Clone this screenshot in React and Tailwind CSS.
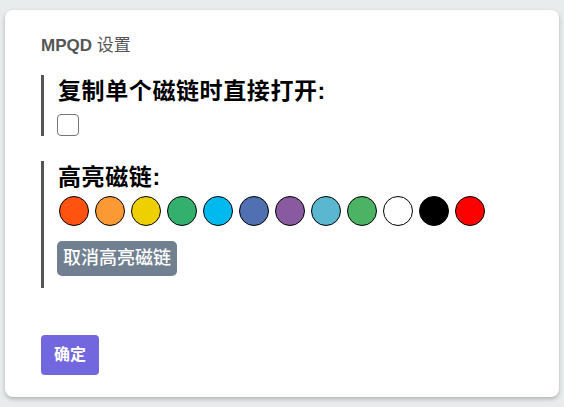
import React, { useState } from 'react';

const COLORS = [
    '#ff530f', '#fb9a35', '#eecf00', '#33b06d', '#00b9ee', '#5170b2',
    '#8a5aa0', '#5ab7cf', '#4cb264', '#ffffff', '#000000', '#ff0000',
];

const App = () => {
    const [openDirect, setOpenDirect] = useState(false);

    return (
        <div
            className="min-h-[407px] bg-[#e9ecec] pt-[10px] pl-[5px]"
            style={{ fontFamily: '"Liberation Sans", "Noto Sans CJK SC", sans-serif' }}
        >
            <div className="w-[554px] h-[387px] rounded-lg bg-white shadow-[0_2px_4px_rgba(0,0,0,0.25)] pl-[36px] pt-[25px]">

                {/* TITLE */}
                <h2 className="text-[17px] leading-[22px] font-bold text-[#555]">
                    MPQD <span className="font-normal">设置</span>
                </h2>

                {/* SECTION 1 */}
                <div className="mt-[18px] border-l-[3px] border-[#555] pl-[14px] h-[61px]">
                    <h3 className="text-[23px] leading-[32px] font-bold text-black tracking-[0.6px]">
                        复制单个磁链时直接打开:
                    </h3>
                    <button
                        onClick={() => setOpenDirect(!openDirect)}
                        className="mt-[7px] -ml-[1px] block h-[22px] w-[22px] rounded-[4px] border-[1.5px] border-[#767676] bg-white"
                    />
                </div>

                {/* SECTION 2 */}
                <div className="mt-[25px] border-l-[3px] border-[#555] pl-[14px] h-[127px]">
                    <h3 className="text-[23px] leading-[32px] font-bold text-black tracking-[0.6px]">
                        高亮磁链:
                    </h3>
                    <div className="mt-[3px] flex gap-[6px] pl-[1px]">
                        {COLORS.map((c) => (
                            <span
                                key={c}
                                className="h-[30px] w-[30px] rounded-full border border-black"
                                style={{ backgroundColor: c }}
                            />
                        ))}
                    </div>
                    <button className="mt-[15px] -ml-[1px] h-[35px] rounded-[5px] bg-[#708090] px-[6px] text-[18px] font-medium text-white">
                        取消高亮磁链
                    </button>
                </div>

                {/* FOOTER */}
                <button className="mt-[47px] h-[40px] w-[58px] rounded-[4px] bg-[#7367df] text-[16px] font-bold text-white">
                    确定
                </button>
            </div>
        </div>
    );
};

export default App;
